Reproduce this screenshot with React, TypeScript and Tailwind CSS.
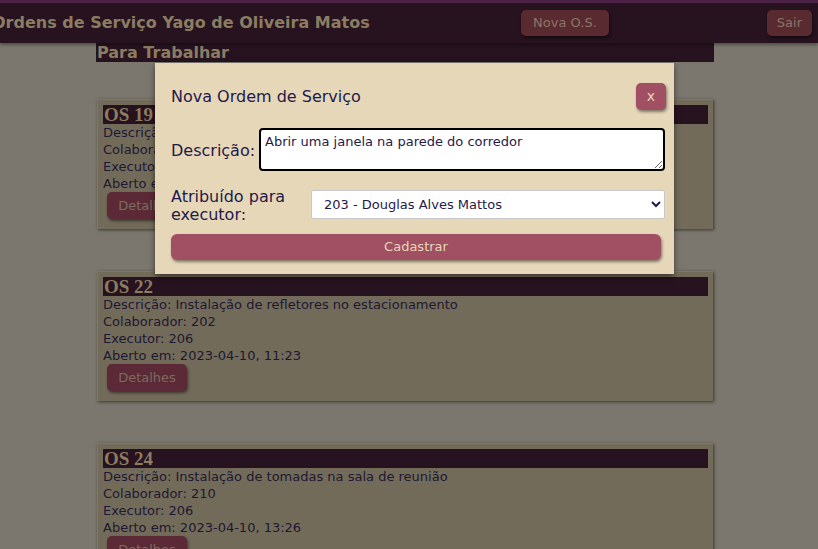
import React from "react";

const cards = [
  { id: 19, desc: "Troca de lâmpadas do corredor", col: "201", exec: "206", at: "2023-04-10, 10:02" },
  { id: 22, desc: "Instalação de refletores no estacionamento", col: "202", exec: "206", at: "2023-04-10, 11:23" },
  { id: 24, desc: "Instalação de tomadas na sala de reunião", col: "210", exec: "206", at: "2023-04-10, 13:26" },
];

export default function App() {
  return (
    <div
      className="relative w-[818px] h-[549px] overflow-hidden bg-[#7b776e]"
      style={{ fontFamily: '"DejaVu Sans", Verdana, sans-serif' }}
    >
      <header className="h-[43px] bg-[#27121f] border-t-[3px] border-[#4b2246] flex items-center justify-between pr-[6px] shadow-[0_2px_3px_rgba(0,0,0,0.35)] relative z-10">
        <h1 className="ml-[-8px] text-[16px] font-bold text-[#8b7d62] leading-none">
          Ordens de Serviço Yago de Oliveira Matos
        </h1>
        <div className="flex items-center">
          <button className="h-[26px] px-[12px] rounded-[5px] bg-[#5a2a31] text-[#8a7565] text-[13px] shadow-[1px_2px_3px_rgba(0,0,0,0.5)] mr-[158px]">
            Nova O.S.
          </button>
          <button className="h-[26px] px-[10px] rounded-[5px] bg-[#5a2a31] text-[#8a7565] text-[13px] shadow-[1px_2px_3px_rgba(0,0,0,0.5)]">
            Sair
          </button>
        </div>
      </header>
      <main className="w-[618px] ml-[96px] relative">
        <div className="h-[19px] bg-[#27121f] text-[#8b7d62] font-bold text-[16px] leading-[20px] pl-[1px]">
          Para Trabalhar
        </div>
        <div className="flex flex-col gap-[42px] mt-[37px] px-[1px]">
          {cards.map((c) => (
            <div
              key={c.id}
              className="h-[130px] bg-[#736b59] pt-[5px] px-[5px] shadow-[1px_1px_3px_rgba(0,0,0,0.55)] border-t border-l border-[#80776a]"
            >
              <div
                className="h-[19px] bg-[#27121f] text-[#8b7d62] font-bold text-[19px] leading-[19px] pl-[1px]"
                style={{ fontFamily: '"Liberation Serif", "Times New Roman", serif' }}
              >
                OS {c.id}
              </div>
              <div className="text-[13px] leading-[17px] text-[#1d1833]">
                <div>Descrição: {c.desc}</div>
                <div>Colaborador: {c.col}</div>
                <div>Executor: {c.exec}</div>
                <div>Aberto em: {c.at}</div>
              </div>
              <button className="mt-[0px] ml-[4px] h-[27px] w-[80px] rounded-[5px] bg-[#5c2a36] text-[#7d6a60] text-[13px] shadow-[1px_2px_3px_rgba(0,0,0,0.5)]">
                Detalhes
              </button>
            </div>
          ))}
        </div>
      </main>

      <div className="absolute left-[155px] top-[63px] w-[519px] h-[211px] bg-[#e6d7b9] shadow-[0_3px_6px_rgba(0,0,0,0.5)] z-20 pl-[16px] pr-[9px] pt-[20px]">
        <div className="flex items-center justify-between h-[27px]">
          <h2 className="text-[16px] text-[#1f1a4a] mt-[1px]">Nova Ordem de Serviço</h2>
          <button className="w-[30px] h-[27px] rounded-[5px] bg-[#a14f63] text-[#e6d7b9] text-[14px] mr-[-1px] shadow-[1px_2px_3px_rgba(0,0,0,0.45)]">
            x
          </button>
        </div>
        <div className="flex items-center mt-[18px]">
          <label className="text-[16px] text-[#1f1a4a] w-[88px] shrink-0 mt-[3px]">Descrição:</label>
          <textarea
            className="w-[406px] shrink-0 h-[43px] bg-white border-2 border-black rounded-[4px] text-[13px] text-[#1f1a4a] px-[4px] py-[4px] leading-[16px] outline-none"
            defaultValue="Abrir uma janela na parede do corredor"
          />
        </div>
        <div className="flex items-center mt-[13px]">
          <label className="text-[16px] text-[#1f1a4a] w-[140px] shrink-0 leading-[18px] mt-[4px]">
            Atribuído para executor:
          </label>
          <select
            className="w-[354px] shrink-0 h-[29px] bg-white border border-[#c8c8c8] rounded-[2px] text-[13px] text-[#1f1a4a] pl-[8px]"
            defaultValue="203"
          >
            <option value="203">203 - Douglas Alves Mattos</option>
          </select>
        </div>
        <button className="mt-[10px] w-[490px] h-[26px] rounded-[6px] bg-[#a14f63] text-[#e6d7b9] text-[13px] shadow-[1px_2px_3px_rgba(0,0,0,0.45)]">
          Cadastrar
        </button>
      </div>
    </div>
  );
}
